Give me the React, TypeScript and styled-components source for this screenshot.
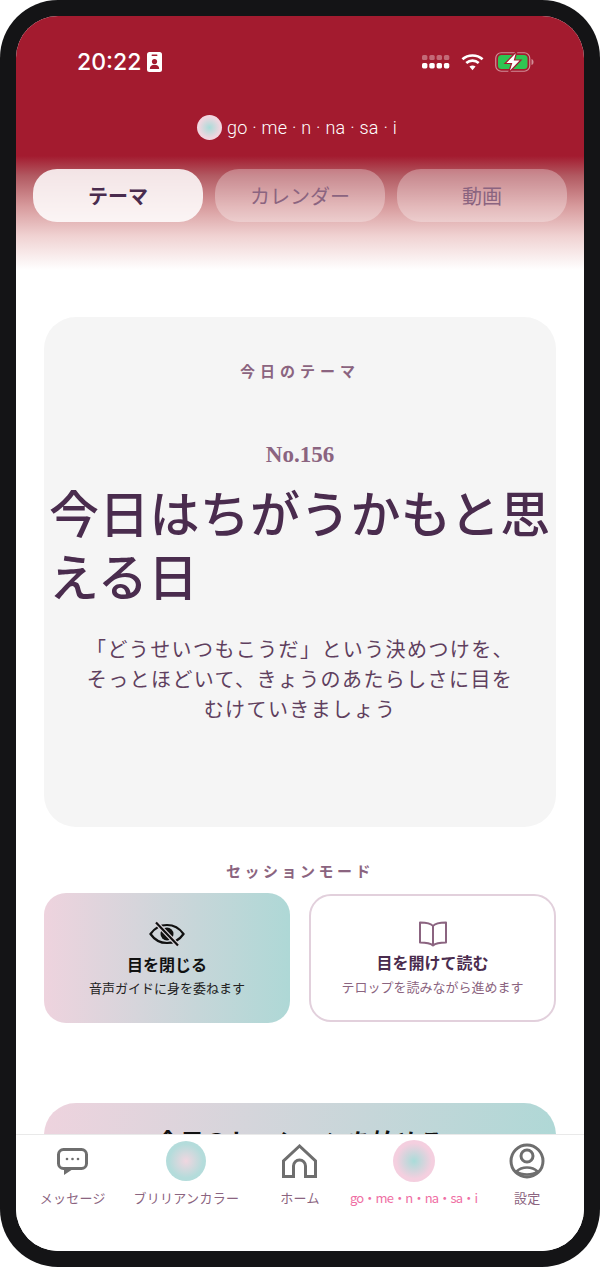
import { FC } from 'react';
import styled, { createGlobalStyle } from 'styled-components';

const JP = `"Noto Sans CJK JP", "Noto Sans", sans-serif`;

const GlobalStyle = createGlobalStyle`
  html, body {
    margin: 0;
    padding: 0;
    background: #fff;
  }
  * {
    box-sizing: border-box;
  }
`;

const Frame = styled.div`
  width: 600px;
  height: 1267px;
  padding: 16px;
  border-radius: 58px;
  background: #141416;
  font-family: ${JP};
`;

const Screen = styled.div`
  display: flex;
  flex-direction: column;
  height: 100%;
  border-radius: 42px;
  overflow: hidden;
  background: #fff;
`;

const Header = styled.header`
  flex: none;
  height: 254px;
  padding: 30px 17px 0;
  background: linear-gradient(
    180deg,
    #a31b2f 0,
    #a31b2f 140px,
    #b25a62 160px,
    #d79a9c 190px,
    #f0d2d2 220px,
    #ffffff 254px
  );
`;

const StatusBar = styled.div`
  display: flex;
  align-items: center;
  justify-content: space-between;
  height: 32px;
  padding: 0 33px 0 44px;
  color: #fff;
`;

const Group = styled.div<{ $gap: number }>`
  display: flex;
  align-items: center;
  gap: ${(p) => p.$gap}px;
`;

const Time = styled.span`
  font-family: Inter, sans-serif;
  font-size: 23px;
  font-weight: 500;
  line-height: 32px;
`;

const Brand = styled.div`
  display: flex;
  align-items: center;
  justify-content: center;
  gap: 5px;
  margin-top: 36px;
  padding-right: 6px;
  height: 26px;
`;

const Orb = styled.span<{ $size: number; $from: string; $to: string }>`
  display: block;
  flex: none;
  width: ${(p) => p.$size}px;
  height: ${(p) => p.$size}px;
  border-radius: 50%;
  background: radial-gradient(circle closest-side, ${(p) => p.$from} 0, ${(p) => p.$to} 85%);
`;

const BrandName = styled.span`
  font-family: Roboto, sans-serif;
  font-size: 18px;
  font-weight: 300;
  letter-spacing: 0.26px;
  color: #fff;
`;

const Tabs = styled.nav`
  display: grid;
  grid-template-columns: repeat(3, 170px);
  gap: 12px;
  margin-top: 29px;
`;

const Tab = styled.div<{ $active?: boolean }>`
  display: flex;
  align-items: center;
  justify-content: center;
  height: 53px;
  border-radius: 24px;
  font-size: 20px;
  font-weight: ${(p) => (p.$active ? 700 : 400)};
  color: ${(p) => (p.$active ? '#4a2c4e' : '#8b6480')};
  background: ${(p) => (p.$active ? 'rgba(255, 255, 255, 0.85)' : 'rgba(255, 255, 255, 0.3)')};
`;

const Content = styled.main`
  flex: 1;
  min-height: 0;
  overflow: hidden;
  padding: 47px 28px 0;
`;

const ThemeCard = styled.section`
  height: 510px;
  padding: 44px 5px 0;
  border-radius: 32px;
  background: #f5f5f5;
`;

const SectionLabel = styled.div<{ $spacing: number }>`
  font-size: 15px;
  font-weight: 700;
  line-height: 20px;
  letter-spacing: ${(p) => p.$spacing}px;
  text-align: center;
  color: #8b6480;
`;

const ThemeNumber = styled.div`
  margin-top: 60px;
  font-family: "Liberation Serif", serif;
  font-size: 23px;
  font-weight: 700;
  line-height: 28px;
  text-align: center;
  color: #8b6480;
`;

const ThemeTitle = styled.h1`
  margin: 11px -4px 0 0;
  font-size: 50px;
  font-weight: 500;
  line-height: 63px;
  letter-spacing: 0.25px;
  color: #4a2c4e;
`;

const ThemeText = styled.p`
  margin: 28px 0 0;
  padding: 0 32px;
  font-size: 20px;
  font-weight: 400;
  line-height: 30px;
  letter-spacing: 1.4px;
  text-align: center;
  color: #5f3f5e;
`;

const ModeLabel = styled(SectionLabel)`
  margin-top: 34px;
`;

const Modes = styled.div`
  display: grid;
  grid-template-columns: 246px 247px;
  gap: 19px;
  margin-top: 12px;
`;

const Mode = styled.div<{ $active?: boolean }>`
  display: flex;
  flex-direction: column;
  align-items: center;
  height: ${(p) => (p.$active ? 130 : 128)}px;
  margin-top: ${(p) => (p.$active ? 0 : 1)}px;
  padding-top: ${(p) => (p.$active ? 28 : 25)}px;
  border-radius: 22px;
  border: ${(p) => (p.$active ? 'none' : '2px solid #e2d0dc')};
  background: ${(p) => (p.$active ? 'linear-gradient(90deg, #eed3de, #aed8d6)' : '#fff')};
`;

const ModeTitle = styled.div<{ $active?: boolean }>`
  margin-top: ${(p) => (p.$active ? 5 : 3)}px;
  font-size: 16px;
  font-weight: 700;
  line-height: 24px;
  color: ${(p) => (p.$active ? '#111' : '#4a2c4e')};
`;

const ModeNote = styled.div<{ $active?: boolean }>`
  margin-top: ${(p) => (p.$active ? 2 : 3)}px;
  font-size: 13px;
  line-height: 20px;
  color: ${(p) => (p.$active ? '#222' : '#8b6480')};
`;

const StartCard = styled.div`
  margin-top: 80px;
  height: 90px;
  padding-top: 24px;
  border-radius: 32px;
  font-size: 24px;
  font-weight: 700;
  line-height: 28px;
  text-align: center;
  color: #111;
  background: linear-gradient(100deg, #eed3de, #aed8d6);
`;

const BottomNav = styled.nav`
  flex: none;
  display: grid;
  grid-template-columns: repeat(5, minmax(0, 1fr));
  height: 117px;
  padding-top: 5px;
  border-top: 1px solid #e9e9e9;
  background: #fff;
`;

const NavItem = styled.div`
  display: flex;
  flex-direction: column;
  align-items: center;
`;

const NavIcon = styled.div`
  display: flex;
  align-items: center;
  justify-content: center;
  height: 42px;
`;

const NavLabel = styled.span<{ $active?: boolean }>`
  margin-top: 6px;
  font-size: 13px;
  line-height: 20px;
  letter-spacing: ${(p) => (p.$active ? -0.8 : 0.3)}px;
  white-space: nowrap;
  color: ${(p) => (p.$active ? '#ef6fa4' : '#8b6480')};
`;

const CallIcon: FC = () => (
  <svg width="15" height="20" viewBox="0 0 15 20">
    <rect width="15" height="20" rx="2.5" fill="#fff" />
    <rect x="4.500" y="2.500" width="6" height="1.600" rx="0.800" fill="#a31b2f" />
    <circle cx="7.500" cy="9.500" r="2.600" fill="#a31b2f" />
    <path d="M2.800 17c0-3 2-4.200 4.700-4.200s4.700 1.200 4.700 4.200z" fill="#a31b2f" />
  </svg>
);

const SignalIcon: FC = () => (
  <svg width="28" height="14" viewBox="0 0 28 14" fill="#fff">
    {[0, 7.3, 14.6, 21.9].map((x) => (
      <g key={x}>
        <rect x={x} y="0" width="5.400" height="5" rx="1.600" opacity="0.35" />
        <rect x={x} y="8" width="5.400" height="5.400" rx="1.600" />
      </g>
    ))}
  </svg>
);

const WifiIcon: FC = () => (
  <svg width="23" height="18" viewBox="0 0 24 18" fill="none" stroke="#fff" strokeWidth="2.800">
    <path d="M1.500 6.200C7.500.9 16.500.9 22.500 6.200" />
    <path d="M5.500 10c3.800-3.300 9.200-3.300 13 0" />
    <path d="M12 17.500 8.800 13.700c1.900-1.500 4.500-1.500 6.400 0z" fill="#fff" stroke="none" />
  </svg>
);

const BatteryIcon: FC = () => (
  <svg width="39" height="22" viewBox="0 -1 39 22">
    <rect x="0.750" y="0.750" width="34" height="18.500" rx="5.500" fill="none" stroke="#fff" strokeOpacity="0.5" strokeWidth="1.200" />
    <rect x="3" y="3" width="29.500" height="14" rx="3.500" fill="#2fc552" />
    <path d="M36.500 7c1.500.5 2 1.500 2 3s-.5 2.500-2 3z" fill="#fff" fillOpacity="0.5" />
    <path d="M22 -1 10 11.500h6.500L13.500 21 26 8h-6.500z" fill="#fff" stroke="#a31b2f" strokeWidth="1.200" />
  </svg>
);

const EyeOffIcon: FC = () => (
  <svg width="36" height="26" viewBox="0 0 36 26" fill="none" stroke="#111" strokeWidth="2.200">
    <path d="M1.500 13C6 6.500 11.500 4 18 4s12 2.500 16.500 9C30 19.500 24.500 22 18 22S6 19.500 1.500 13z" />
    <circle cx="18" cy="13" r="6.500" fill="#111" stroke="none" />
    <path d="M7 1.500 29 24.500" stroke="#ddd6dc" strokeWidth="4.500" />
    <path d="M7 1.500 29 24.500" />
  </svg>
);

const BookIcon: FC = () => (
  <svg width="30" height="26" viewBox="0 0 30 26" fill="none" stroke="#8b6480" strokeWidth="2" strokeLinejoin="round">
    <path d="M15 5C13 2.500 9 1.500 2 1.500v20c7 0 10.500 .8 13 3 2.500-2.200 6-3 13-3v-20C21 1.500 17 2.500 15 5z" />
    <path d="M15 5v19.500" />
  </svg>
);

const ChatIcon: FC = () => (
  <svg width="31" height="27" viewBox="0 0 31 27" fill="none">
    <rect x="1.500" y="1.500" width="28" height="19" rx="5" stroke="#6e6e6e" strokeWidth="3" />
    <path d="M7 21h9l-9 6z" fill="#6e6e6e" />
    <circle cx="10" cy="11" r="1.300" fill="#6e6e6e" />
    <circle cx="15.500" cy="11" r="1.300" fill="#6e6e6e" />
    <circle cx="21" cy="11" r="1.300" fill="#6e6e6e" />
  </svg>
);

const HomeIcon: FC = () => (
  <svg width="35" height="34" viewBox="0 0 35 34" fill="none" stroke="#6e6e6e" strokeWidth="3" strokeLinejoin="miter">
    <path d="M17.500 2 1.500 17v15.500h10V22a6 6 0 0 1 12 0v10.500h10V17z" />
  </svg>
);

const ProfileIcon: FC = () => (
  <svg width="36" height="36" viewBox="0 0 36 36" fill="none" stroke="#6e6e6e" strokeWidth="3">
    <circle cx="18" cy="18" r="16" />
    <circle cx="18" cy="13" r="6" />
    <path d="M7.500 28.500c2.500-2.500 6.500-4 10.500-4s8 1.500 10.500 4c-2.500 2-6.500 3-10.500 3s-8-1-10.500-3z" strokeWidth="2.500" />
  </svg>
);

const navItems = [
  { label: 'メッセージ', icon: <ChatIcon /> },
  { label: 'ブリリアンカラー', icon: <Orb $size={40} $from="#f0d6e0" $to="#b4dcdb" /> },
  { label: 'ホーム', icon: <HomeIcon /> },
  { label: 'go・me・n・na・sa・i', icon: <Orb $size={42} $from="#a9dcd9" $to="#f4cfdf" />, active: true },
  { label: '設定', icon: <ProfileIcon /> },
];

const App: FC = () => {
  return (
    <Frame>
      <GlobalStyle />
      <Screen>
        <Header>
          <StatusBar>
            <Group $gap={6}>
              <Time>20:22</Time>
              <CallIcon />
            </Group>
            <Group $gap={11}>
              <SignalIcon />
              <WifiIcon />
              <BatteryIcon />
            </Group>
          </StatusBar>
          <Brand>
            <Orb $size={25} $from="#a9dcd9" $to="#f0d6e0" />
            <BrandName>go · me · n · na · sa · i</BrandName>
          </Brand>
          <Tabs>
            <Tab $active>テーマ</Tab>
            <Tab>カレンダー</Tab>
            <Tab>動画</Tab>
          </Tabs>
        </Header>
        <Content>
          <ThemeCard>
            <SectionLabel $spacing={5}>今日のテーマ</SectionLabel>
            <ThemeNumber>No.156</ThemeNumber>
            <ThemeTitle>今日はちがうかもと思える日</ThemeTitle>
            <ThemeText>「どうせいつもこうだ」という決めつけを、そっとほどいて、きょうのあたらしさに目をむけていきましょう</ThemeText>
          </ThemeCard>
          <ModeLabel $spacing={3.5}>セッションモード</ModeLabel>
          <Modes>
            <Mode $active>
              <EyeOffIcon />
              <ModeTitle $active>目を閉じる</ModeTitle>
              <ModeNote $active>音声ガイドに身を委ねます</ModeNote>
            </Mode>
            <Mode>
              <BookIcon />
              <ModeTitle>目を開けて読む</ModeTitle>
              <ModeNote>テロップを読みながら進めます</ModeNote>
            </Mode>
          </Modes>
          <StartCard>今日のセッションを始める</StartCard>
        </Content>
        <BottomNav>
          {navItems.map((item) => (
            <NavItem key={item.label}>
              <NavIcon>{item.icon}</NavIcon>
              <NavLabel $active={item.active}>{item.label}</NavLabel>
            </NavItem>
          ))}
        </BottomNav>
      </Screen>
    </Frame>
  );
};

export default App;
